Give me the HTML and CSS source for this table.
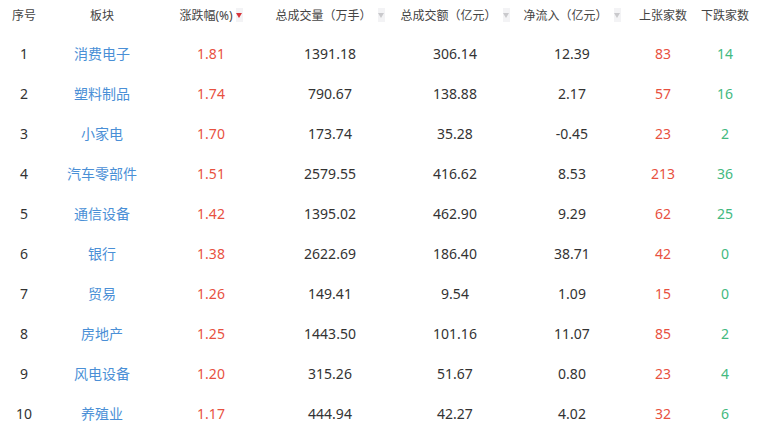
FILE: index.html
```html
<!DOCTYPE html>
<html lang="zh-CN">
<head>
<meta charset="utf-8">
<title>板块</title>
<link rel="stylesheet" href="styles.css">
</head>
<body>
<div class="table">
  <div class="row head">
    <div class="cell">序号</div>
    <div class="cell">板块</div>
    <div class="cell">涨跌幅(%)<span class="sort active"></span></div>
    <div class="cell">总成交量（万手）<span class="sort"></span></div>
    <div class="cell">总成交额（亿元）<span class="sort"></span></div>
    <div class="cell">净流入（亿元）<span class="sort"></span></div>
    <div class="cell">上张家数</div>
    <div class="cell">下跌家数</div>
  </div>
  <div class="row"><div class="cell">1</div><div class="cell name">消费电子</div><div class="cell up">1.81</div><div class="cell">1391.18</div><div class="cell">306.14</div><div class="cell">12.39</div><div class="cell up">83</div><div class="cell down">14</div></div>
  <div class="row"><div class="cell">2</div><div class="cell name">塑料制品</div><div class="cell up">1.74</div><div class="cell">790.67</div><div class="cell">138.88</div><div class="cell">2.17</div><div class="cell up">57</div><div class="cell down">16</div></div>
  <div class="row"><div class="cell">3</div><div class="cell name">小家电</div><div class="cell up">1.70</div><div class="cell">173.74</div><div class="cell">35.28</div><div class="cell">-0.45</div><div class="cell up">23</div><div class="cell down">2</div></div>
  <div class="row"><div class="cell">4</div><div class="cell name">汽车零部件</div><div class="cell up">1.51</div><div class="cell">2579.55</div><div class="cell">416.62</div><div class="cell">8.53</div><div class="cell up">213</div><div class="cell down">36</div></div>
  <div class="row"><div class="cell">5</div><div class="cell name">通信设备</div><div class="cell up">1.42</div><div class="cell">1395.02</div><div class="cell">462.90</div><div class="cell">9.29</div><div class="cell up">62</div><div class="cell down">25</div></div>
  <div class="row"><div class="cell">6</div><div class="cell name">银行</div><div class="cell up">1.38</div><div class="cell">2622.69</div><div class="cell">186.40</div><div class="cell">38.71</div><div class="cell up">42</div><div class="cell down">0</div></div>
  <div class="row"><div class="cell">7</div><div class="cell name">贸易</div><div class="cell up">1.26</div><div class="cell">149.41</div><div class="cell">9.54</div><div class="cell">1.09</div><div class="cell up">15</div><div class="cell down">0</div></div>
  <div class="row"><div class="cell">8</div><div class="cell name">房地产</div><div class="cell up">1.25</div><div class="cell">1443.50</div><div class="cell">101.16</div><div class="cell">11.07</div><div class="cell up">85</div><div class="cell down">2</div></div>
  <div class="row"><div class="cell">9</div><div class="cell name">风电设备</div><div class="cell up">1.20</div><div class="cell">315.26</div><div class="cell">51.67</div><div class="cell">0.80</div><div class="cell up">23</div><div class="cell down">4</div></div>
  <div class="row"><div class="cell">10</div><div class="cell name">养殖业</div><div class="cell up">1.17</div><div class="cell">444.94</div><div class="cell">42.27</div><div class="cell">4.02</div><div class="cell up">32</div><div class="cell down">6</div></div>
</div>
</body>
</html>
```
FILE: styles.css
```css
html, body {
  margin: 0;
  padding: 0;
  background: #ffffff;
}
body {
  font-family: "Noto Sans", "Noto Sans CJK SC", sans-serif;
  color: #333333;
}
.table {
  width: 752px;
}
.row {
  display: grid;
  grid-template-columns: 48px 108px 110px 128px 122px 112px 70px 54px;
  height: 40px;
  align-items: center;
  font-size: 14px;
}
.row.head {
  height: 30px;
  margin-bottom: 3px;
  font-size: 12px;
  color: #444444;
}
.cell {
  display: flex;
  justify-content: center;
  align-items: center;
  white-space: nowrap;
}
.name {
  color: #4a8fd6;
}
.up {
  color: #e8513f;
}
.down {
  color: #43b97f;
}
.sort {
  width: 7px;
  height: 14px;
  margin-left: 6px;
  background: #f3f3f5;
  display: flex;
  align-items: center;
  justify-content: center;
}
.sort::after {
  content: "";
  width: 0;
  height: 0;
  border-left: 3.5px solid transparent;
  border-right: 3.5px solid transparent;
  border-top: 5px solid #c9c9cc;
}
.sort.active {
  margin-left: 3px;
}
.sort.active::after {
  border-top-color: #d7353b;
}
```
